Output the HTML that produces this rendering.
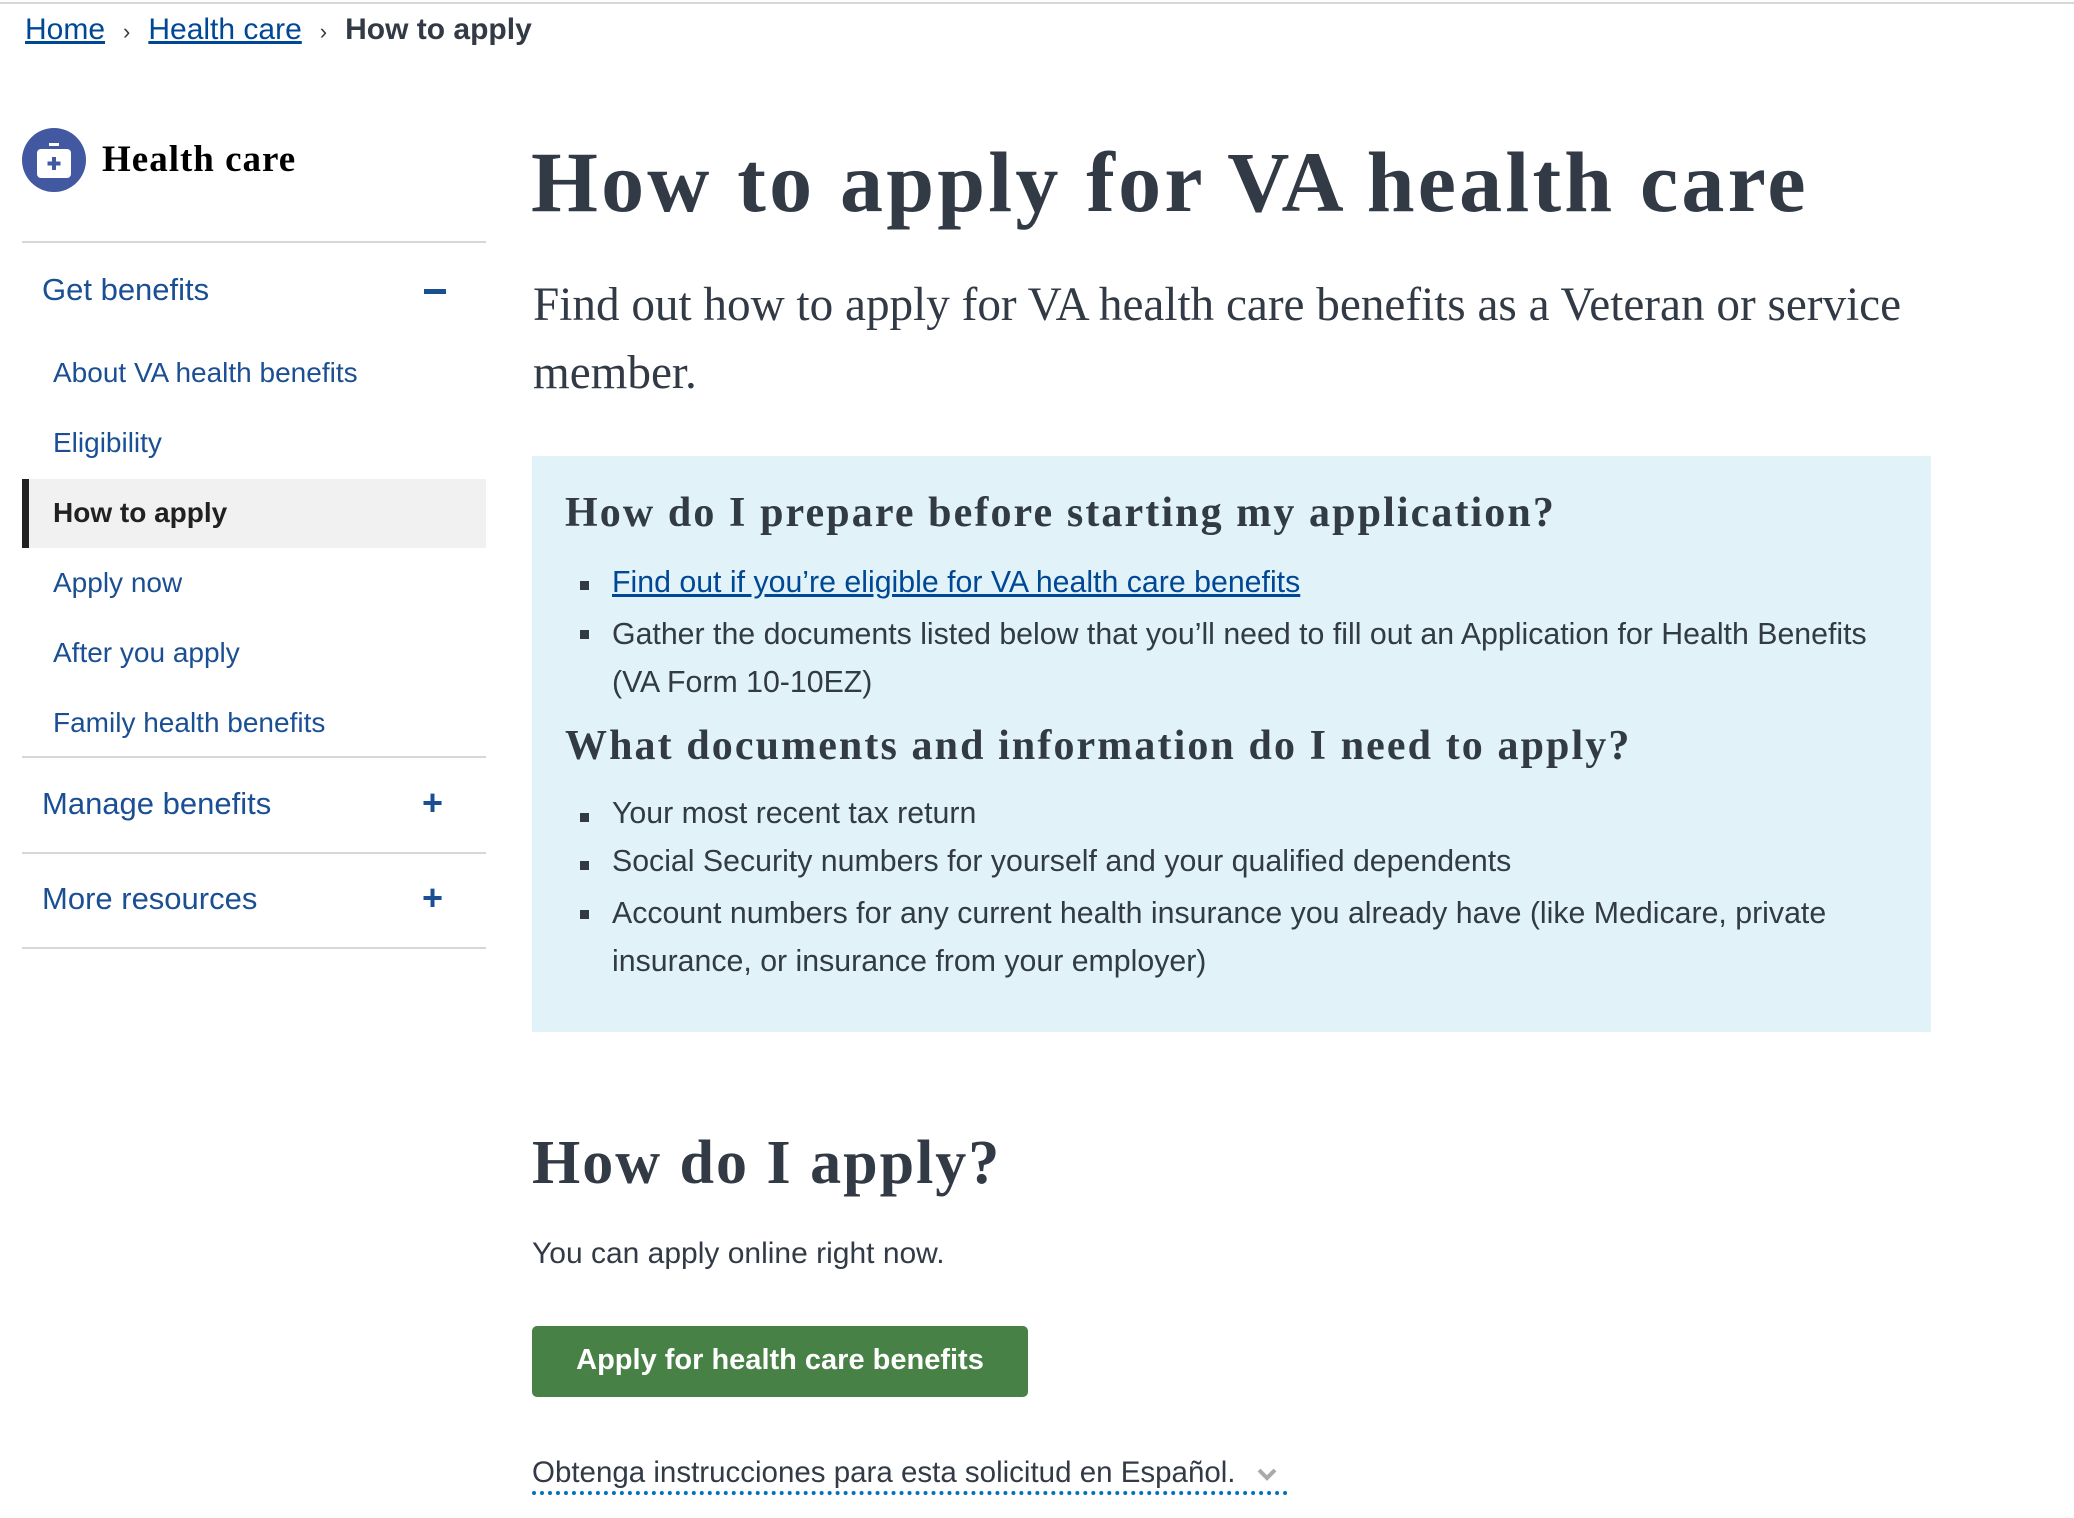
<!DOCTYPE html>
<html><head><meta charset="utf-8"><style>
*{margin:0;padding:0;box-sizing:border-box}
body{width:2074px;height:1518px;overflow:hidden;background:#fff;font-family:"Liberation Sans",sans-serif;color:#323a45;position:relative}
.a{position:absolute;white-space:nowrap}
.serif{font-family:"Liberation Serif",serif;font-weight:bold}
.nav{color:#1b4f94}
.line{position:absolute;left:22px;width:464px;height:2px;background:#d6d7d9}
a{color:#004795}
.bul{position:absolute;left:580px;width:9px;height:9px;background:#323a45}
.t{font-size:30.3px}
</style></head><body>
<div style="position:absolute;top:2px;left:0;width:2074px;height:2px;background:#d6d7d9"></div>
<div class="a" style="top:10px;left:25px;font-size:30px;line-height:40px">
<a href="#" style="color:#004795">Home</a><span style="margin:0 18px;font-size:22px">›</span><a href="#">Health care</a><span style="margin:0 18px;font-size:22px">›</span><b>How to apply</b></div>

<div style="position:absolute;left:22px;top:128px;width:64px;height:64px;border-radius:50%;background:#4258a0"></div>
<svg style="position:absolute;left:22px;top:128px" width="64" height="64" viewBox="0 0 64 64">
<rect x="15" y="21" width="34" height="29" rx="4" fill="#fff"/><rect x="27" y="15" width="10" height="3" fill="#fff"/>
<rect x="30" y="29" width="4" height="13" fill="#4258a0"/><rect x="25.5" y="33.5" width="13" height="4" fill="#4258a0"/></svg>
<div class="a serif" style="top:138px;left:102px;font-size:37px;color:#000;letter-spacing:1px">Health care</div>
<div class="line" style="top:241px"></div>
<div class="a nav" style="top:272px;left:42px;font-size:31px">Get benefits</div>
<div style="position:absolute;left:424px;top:289px;width:22px;height:5px;background:#1b4f94"></div>
<div class="a nav" style="top:357px;left:53px;font-size:28px">About VA health benefits</div>
<div class="a nav" style="top:427px;left:53px;font-size:28px">Eligibility</div>
<div style="position:absolute;left:22px;top:479px;width:464px;height:69px;background:#f1f1f1;border-left:7px solid #212121"></div>
<div class="a" style="top:497px;left:53px;font-size:28px;font-weight:bold;color:#212121">How to apply</div>
<div class="a nav" style="top:567px;left:53px;font-size:28px">Apply now</div>
<div class="a nav" style="top:637px;left:53px;font-size:28px">After you apply</div>
<div class="a nav" style="top:707px;left:53px;font-size:28px">Family health benefits</div>
<div class="line" style="top:756px"></div>
<div class="a nav" style="top:786px;left:42px;font-size:31px">Manage benefits</div>
<div class="a nav" style="top:782px;left:422px;font-size:36px;font-weight:bold">+</div>
<div class="line" style="top:852px"></div>
<div class="a nav" style="top:881px;left:42px;font-size:31px">More resources</div>
<div class="a nav" style="top:877px;left:422px;font-size:36px;font-weight:bold">+</div>
<div class="line" style="top:947px"></div>

<div class="a serif" style="top:132px;left:531px;font-size:86px;letter-spacing:3.2px">How to apply for VA health care</div>
<div class="a" style="top:271px;left:533px;font-size:47.2px;line-height:68px;font-family:'Liberation Serif',serif;white-space:normal;width:1440px">Find out how to apply for VA health care benefits as a Veteran or service member.</div>

<div style="position:absolute;left:532px;top:456px;width:1399px;height:576px;background:#e1f3f8"></div>
<div class="a serif" style="top:489px;left:565px;font-size:42px;letter-spacing:2.1px">How do I prepare before starting my application?</div>
<div class="bul" style="top:581px"></div>
<div class="a t" style="top:566px;left:612px"><a href="#">Find out if you’re eligible for VA health care benefits</a></div>
<div class="bul" style="top:630px"></div>
<div class="a t" style="top:611px;left:612px;line-height:48px;white-space:normal;width:1300px">Gather the documents listed below that you’ll need to fill out an Application for Health Benefits (VA Form 10-10EZ)</div>
<div class="a serif" style="top:722px;left:565px;font-size:42px;letter-spacing:2.1px">What documents and information do I need to apply?</div>
<div class="bul" style="top:813px"></div>
<div class="a t" style="top:797px;left:612px">Your most recent tax return</div>
<div class="bul" style="top:861px"></div>
<div class="a t" style="top:845px;left:612px">Social Security numbers for yourself and your qualified dependents</div>
<div class="bul" style="top:910px"></div>
<div class="a t" style="top:890px;left:612px;line-height:48px;white-space:normal;width:1300px">Account numbers for any current health insurance you already have (like Medicare, private insurance, or insurance from your employer)</div>

<div class="a serif" style="top:1128px;left:532px;font-size:62px;letter-spacing:2px">How do I apply?</div>
<div class="a" style="top:1237px;left:532px;font-size:30px">You can apply online right now.</div>
<div style="position:absolute;left:532px;top:1326px;width:496px;height:71px;background:#478146;border-radius:5px"></div>
<div class="a" style="top:1344px;left:532px;width:496px;text-align:center;font-size:29px;font-weight:bold;color:#fff">Apply for health care benefits</div>
<div class="a" style="top:1456px;left:532px;font-size:29.5px">Obtenga instrucciones para esta solicitud en Español.</div>
<svg style="position:absolute;left:1256px;top:1466px" width="22" height="16" viewBox="0 0 22 16"><path d="M3 4 L11 12 L19 4" stroke="#aaa" stroke-width="4" fill="none"/></svg>
<div style="position:absolute;left:532px;top:1491px;width:756px;border-top:4px dotted #0071bb"></div>
</body></html>
